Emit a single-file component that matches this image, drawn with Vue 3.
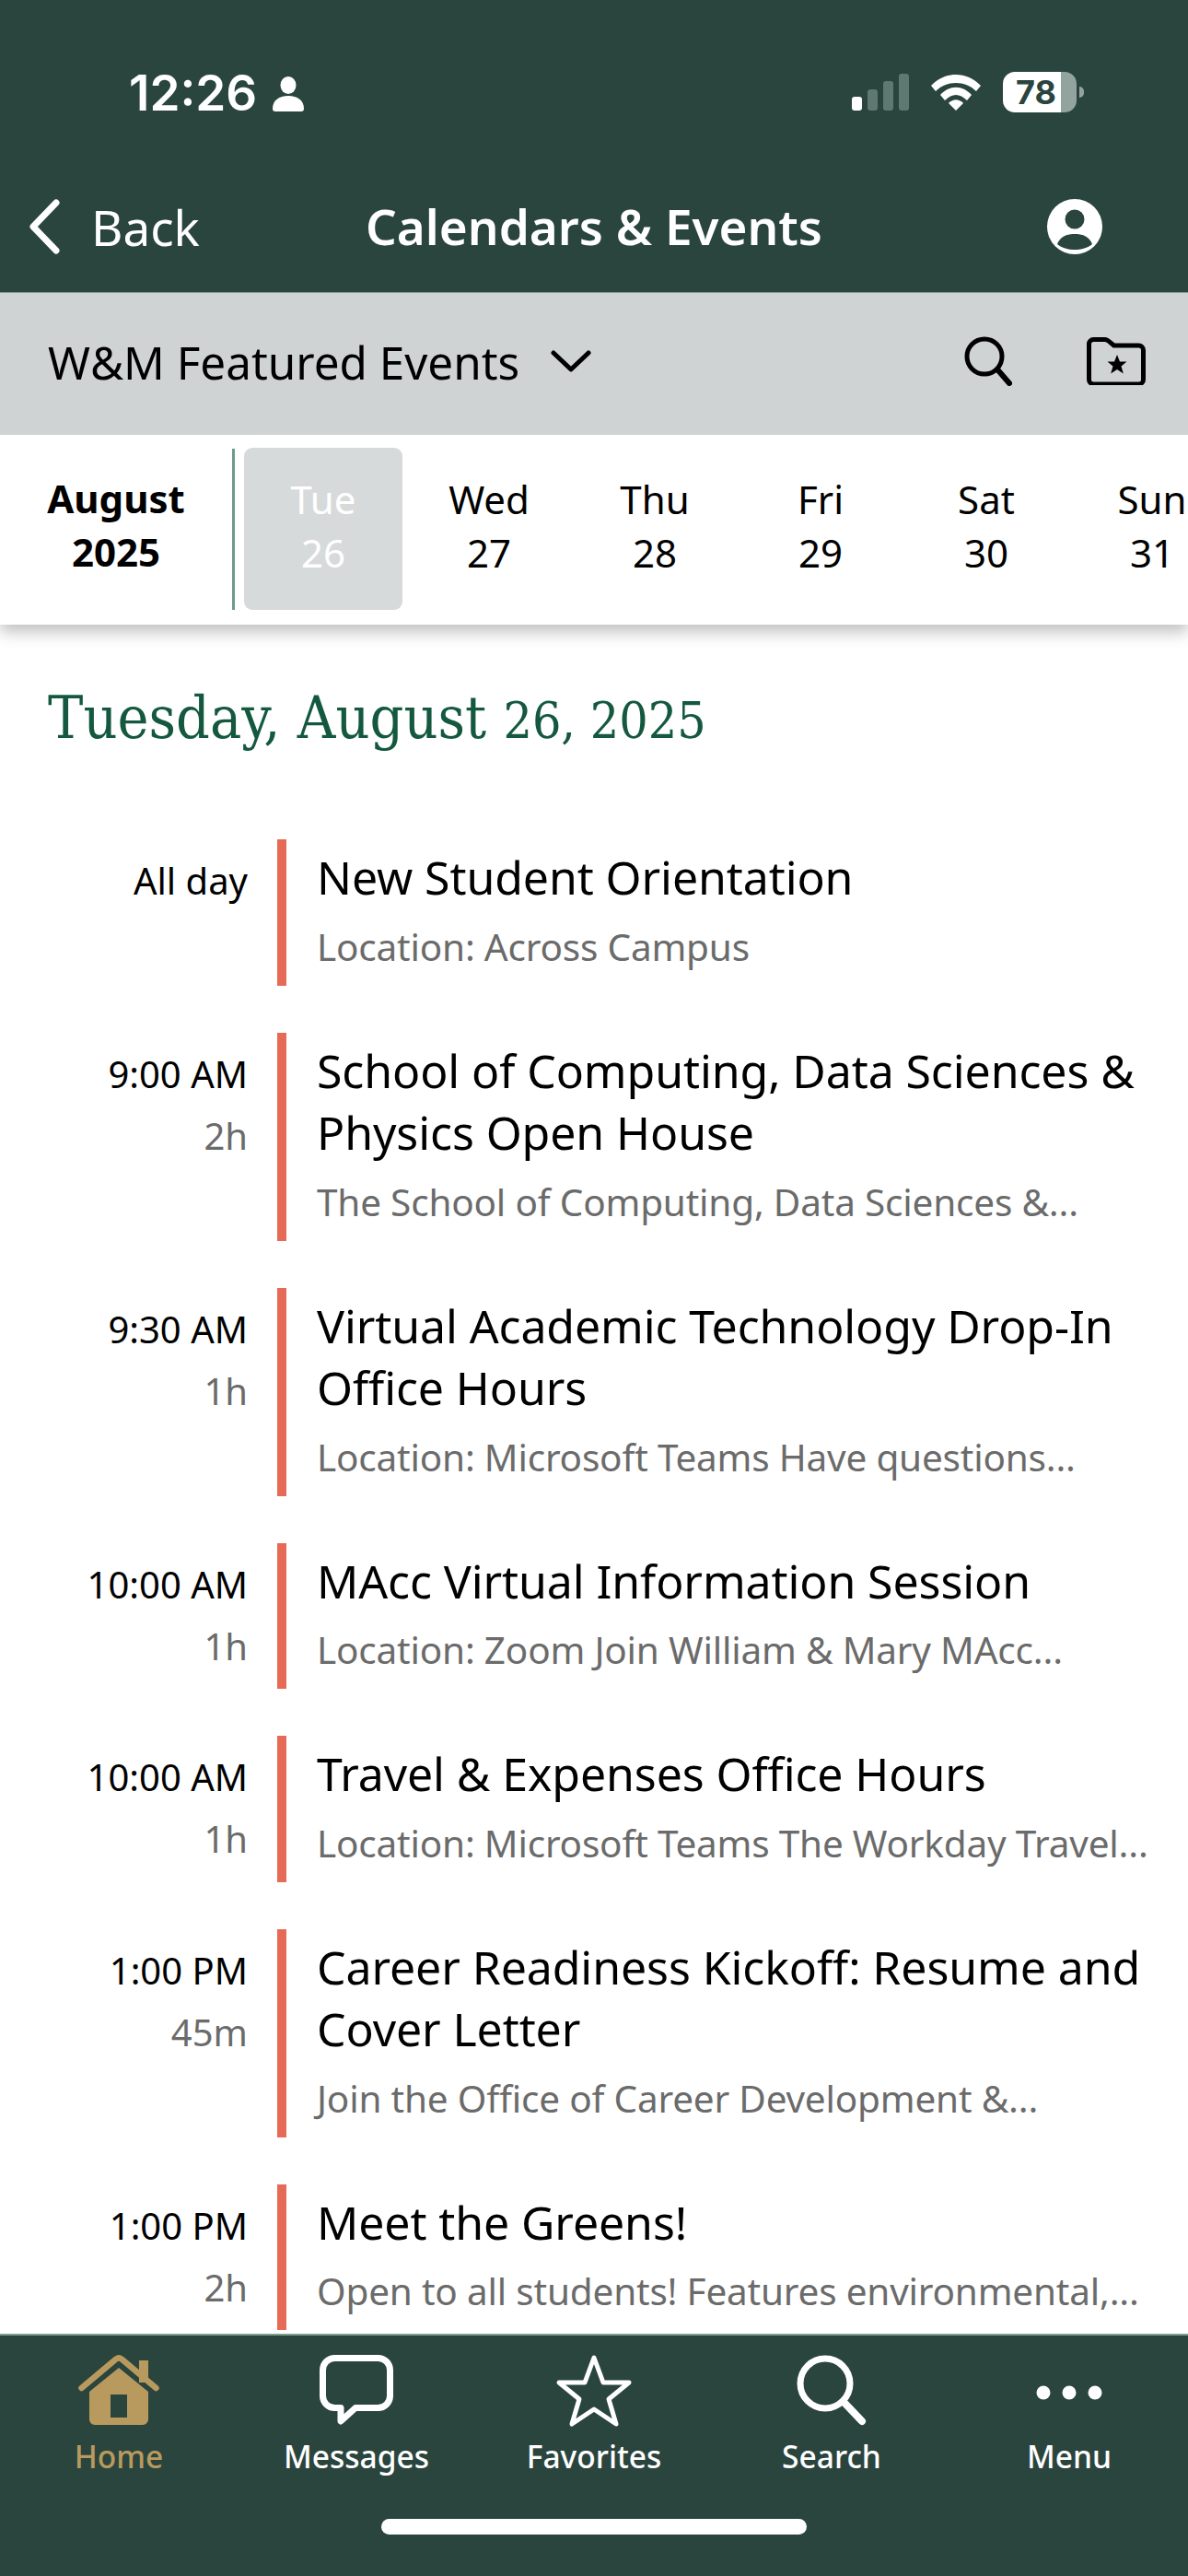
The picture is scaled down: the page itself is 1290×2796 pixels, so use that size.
<script setup>
// calendar day view, data is static
const days = [
  { name: "Tue", num: 26, active: true },
  { name: "Wed", num: 27 },
  { name: "Thu", num: 28 },
  { name: "Fri", num: 29 },
  { name: "Sat", num: 30 },
  { name: "Sun", num: 31 },
];

const events = [
  { time: "All day", title: ["New Student Orientation"], desc: "Location: Across Campus" },
  { time: "9:00 AM", dur: "2h", title: ["School of Computing, Data Sciences &", "Physics Open House"], desc: "The School of Computing, Data Sciences &..." },
  { time: "9:30 AM", dur: "1h", title: ["Virtual Academic Technology Drop-In", "Office Hours"], desc: "Location: Microsoft Teams Have questions..." },
  { time: "10:00 AM", dur: "1h", title: ["MAcc Virtual Information Session"], desc: "Location: Zoom Join William & Mary MAcc..." },
  { time: "10:00 AM", dur: "1h", title: ["Travel & Expenses Office Hours"], desc: "Location: Microsoft Teams The Workday Travel..." },
  { time: "1:00 PM", dur: "45m", title: ["Career Readiness Kickoff: Resume and", "Cover Letter"], desc: "Join the Office of Career Development &..." },
  { time: "1:00 PM", dur: "2h", title: ["Meet the Greens!"], desc: "Open to all students! Features environmental,..." },
];
</script>

<template>
  <div class="page">
    <header class="top">
      <div class="status">
        <div class="status-left">
          <span class="clock">12:26</span>
          <svg class="person" viewBox="0 0 34 38" width="34" height="38">
            <ellipse cx="17" cy="9.500" rx="8.500" ry="9.500" fill="#fff" />
            <path d="M0 35c0-9 7-14 17-14s17 5 17 14c0 2-1 3-3 3H3c-2 0-3-1-3-3z" fill="#fff" />
          </svg>
        </div>
        <div class="status-right">
          <svg viewBox="0 0 62 40" width="62" height="40">
            <rect x="0" y="25" width="11" height="15" rx="3" fill="#fff" />
            <rect x="17" y="17" width="11" height="23" rx="3" fill="#5f7871" />
            <rect x="34" y="8" width="11" height="32" rx="3" fill="#5f7871" />
            <rect x="51" y="0" width="11" height="40" rx="3" fill="#5f7871" />
          </svg>
          <svg class="wifi" viewBox="0 0 54 40" width="54" height="40">
            <path d="M0 13C15 -3 39 -3 54 13L49 19C37 7 17 7 5 19z" fill="#fff" />
            <path d="M10 23C20 12 34 12 44 23L39 29C31 21 23 21 15 29z" fill="#fff" />
            <path d="M19 32C24 27 30 27 35 32L27 40z" fill="#fff" />
          </svg>
          <div class="battery">
            <div class="battery-body"><span>78</span></div>
            <div class="battery-tip"></div>
          </div>
        </div>
      </div>
      <div class="nav">
        <div class="back">
          <svg viewBox="0 0 36 60" width="36" height="60">
            <path d="M31 4L6 30l25 26" fill="none" stroke="#fff" stroke-width="7" stroke-linecap="round" stroke-linejoin="round" />
          </svg>
          <span>Back</span>
        </div>
        <div class="nav-title">Calendars &amp; Events</div>
        <svg class="avatar" viewBox="0 0 60 60" width="60" height="60">
          <circle cx="30" cy="30" r="30" fill="#fff" />
          <circle cx="30" cy="22" r="10.5" fill="#2a453e" />
          <path d="M11 49c3-8 10-11 19-11s16 3 19 11c-5 4-12 6-19 6s-14-2-19-6z" fill="#2a453e" />
        </svg>
      </div>
    </header>

    <div class="filter">
      <span class="filter-name">W&amp;M Featured Events</span>
      <svg class="filter-chev" viewBox="0 0 44 24" width="44" height="24">
        <path d="M3 3l19 18L41 3" fill="none" stroke="#000" stroke-width="5" stroke-linecap="round" stroke-linejoin="round" />
      </svg>
      <svg class="filter-search" viewBox="0 0 52 54" width="52" height="54">
        <circle cx="22" cy="22" r="19" fill="none" stroke="#000" stroke-width="5" />
        <path d="M36 36l13 15" fill="none" stroke="#000" stroke-width="6" stroke-linecap="round" />
      </svg>
      <svg class="filter-folder" viewBox="0 0 64 52" width="64" height="52">
        <path d="M2.500 8a5 5 0 0 1 5-5.500h12c3 0 5 2 7 4l3 2.500h27a5 5 0 0 1 5 5v32a5 5 0 0 1-5 5h-49a5 5 0 0 1-5-5z" fill="none" stroke="#000" stroke-width="5" />
        <path d="M33 19l3 7.500h7.500l-6 5 2.300 8L33 35l-6.800 4.500 2.300-8-6-5H30z" fill="#000" />
      </svg>
    </div>

    <div class="strip">
      <div class="month">August<br />2025</div>
      <div class="days">
        <div v-for="d in days" :key="d.num" class="day" :class="{ 'day--active': d.active }">
          <span>{{ d.name }}</span>
          <span>{{ d.num }}</span>
        </div>
      </div>
    </div>

    <main class="list">
      <h1 class="date">Tuesday, August <span class="date-num">26, 2025</span></h1>
      <div v-for="(e, i) in events" :key="i" class="event">
        <div class="when">
          <div>{{ e.time }}</div>
          <div v-if="e.dur" class="dur">{{ e.dur }}</div>
        </div>
        <div class="info">
          <div v-for="line in e.title" :key="line" class="title">{{ line }}</div>
          <div class="desc">{{ e.desc }}</div>
        </div>
      </div>
    </main>

    <footer class="tabs">
      <div class="tab-row">
        <div class="tab tab--on">
          <svg viewBox="0 0 88 78" width="88" height="78">
            <path d="M66 7h10v24H66z" fill="#b99a5e" />
            <path d="M3.500 37L41 5.500c2-1.500 4-1.500 6 0L84.500 37" fill="none" stroke="#b99a5e" stroke-width="6.500" stroke-linecap="round" stroke-linejoin="round" />
            <path d="M44 15L76 41v30a6 6 0 0 1-6 6H18a6 6 0 0 1-6-6V41zM35 44v25h18V44z" fill="#b99a5e" fill-rule="evenodd" />
          </svg>
          <span>Home</span>
        </div>
        <div class="tab">
          <svg viewBox="0 0 80 76" width="80" height="76">
            <path d="M16.500 3.500h47a13 13 0 0 1 13 13v28a13 13 0 0 1-13 13H39L23 72V57.500h-6.500a13 13 0 0 1-13-13v-28a13 13 0 0 1 13-13z" fill="none" stroke="#fff" stroke-width="7" stroke-linejoin="round" />
          </svg>
          <span>Messages</span>
        </div>
        <div class="tab">
          <svg viewBox="0 0 84 80" width="84" height="80">
            <path d="M42 5l10 27h28L58 50l8 27-24-16-24 16 8-27L4 32h28z" fill="none" stroke="#fff" stroke-width="5" stroke-linejoin="round" />
          </svg>
          <span>Favorites</span>
        </div>
        <div class="tab">
          <svg viewBox="0 0 76 76" width="76" height="76">
            <circle cx="31" cy="31" r="27" fill="none" stroke="#fff" stroke-width="7" />
            <path d="M51 51l20 21" fill="none" stroke="#fff" stroke-width="8" stroke-linecap="round" />
          </svg>
          <span>Search</span>
        </div>
        <div class="tab">
          <svg viewBox="0 0 76 78" width="76" height="78">
            <circle cx="10" cy="42" r="7.500" fill="#fff" />
            <circle cx="38" cy="42" r="7.500" fill="#fff" />
            <circle cx="66" cy="42" r="7.500" fill="#fff" />
          </svg>
          <span>Menu</span>
        </div>
      </div>
      <div class="home-bar"></div>
    </footer>
  </div>
</template>

<style scoped>
.page {
  width: 1290px;
  height: 2796px;
  display: flex;
  flex-direction: column;
  overflow: hidden;
  background: #fff;
  font-family: "Noto Sans", sans-serif;
  color: #000;
}

/* header */
.top {
  height: 318px;
  flex-shrink: 0;
  background: #2a453e;
  color: #fff;
  border-bottom: 1px solid #8a9692;
  box-sizing: border-box;
}
.status {
  height: 216px;
  padding: 78px 113px 0 140px;
  box-sizing: border-box;
  display: flex;
  justify-content: space-between;
  align-items: flex-start;
}
.status-left {
  display: flex;
  align-items: center;
  gap: 17px;
  height: 44px;
}
.clock {
  font-family: Inter, sans-serif;
  font-size: 53px;
  font-weight: 600;
  position: relative;
  top: 1px;
}
.person {
  margin-top: 4px;
}
.status-right {
  display: flex;
  align-items: center;
  gap: 24px;
  height: 44px;
}
.battery {
  display: flex;
  align-items: center;
  gap: 3px;
}
.battery-body {
  width: 80px;
  height: 44px;
  border-radius: 13px;
  background: linear-gradient(to right, #fff 0, #fff 63px, #93a39e 63px);
  display: flex;
  align-items: center;
  padding-left: 14px;
  box-sizing: border-box;
  color: #2a453e;
  font-family: Inter, sans-serif;
  font-size: 36px;
  font-weight: 700;
}
.battery-tip {
  width: 5px;
  height: 12px;
  background: #93a39e;
  border-radius: 0 6px 6px 0;
}
.nav {
  height: 60px;
  display: flex;
  align-items: center;
  padding: 0 93px 0 30px;
  position: relative;
}
.back {
  display: flex;
  align-items: center;
  gap: 33px;
  font-size: 53px;
}
.nav-title {
  position: absolute;
  left: 0;
  right: 0;
  padding-bottom: 2px;
  text-align: center;
  font-size: 53px;
  font-weight: 600;
}
.avatar {
  margin-left: auto;
}

/* gray filter bar */
.filter {
  height: 154px;
  flex-shrink: 0;
  background: #d0d3d4;
  display: flex;
  align-items: center;
  padding: 0 46px 6px 52px;
  box-sizing: border-box;
}
.filter-name {
  font-size: 49.400px;
}
.filter-chev {
  margin-left: 34px;
}
.filter-search {
  margin-left: auto;
}
.filter-folder {
  margin-left: 81px;
}

/* date strip */
.strip {
  height: 206px;
  flex-shrink: 0;
  display: flex;
  background: #fff;
  box-shadow: 0 8px 16px rgba(0, 0, 0, 0.25);
  position: relative;
  z-index: 1;
  overflow: hidden;
  clip-path: inset(0 0 -30px 0);
}
.month {
  width: 255px;
  height: 175px;
  flex-shrink: 0;
  margin-top: 15px;
  padding-top: 25px;
  box-sizing: border-box;
  text-align: center;
  font-size: 42px;
  line-height: 58px;
  font-weight: 700;
  border-right: 3px solid #6f9a8c;
}
.days {
  display: flex;
  padding: 14px 0 0 6px;
}
.day {
  width: 172px;
  height: 176px;
  margin: 0 4px;
  flex-shrink: 0;
  display: flex;
  flex-direction: column;
  align-items: center;
  padding-top: 27px;
  box-sizing: border-box;
  font-size: 42px;
  line-height: 58px;
  border-radius: 9px;
}
.day--active {
  background: #d7dadb;
  color: #fff;
}

/* event list */
.list {
  flex: 1;
  min-height: 0;
  overflow: hidden;
  padding-top: 41px;
}
.date {
  margin: 0 0 69px 52px;
  font-family: "DejaVu Serif Condensed", "DejaVu Serif", serif;
  font-size: 64px;
  line-height: 120px;
  font-weight: 400;
  color: #14593f;
}
.date-num {
  font-size: 55px;
}
.event {
  display: flex;
  margin-bottom: 51px;
}
.when {
  width: 269px;
  flex-shrink: 0;
  text-align: right;
  padding-top: 11px;
  font-size: 40px;
  line-height: 67px;
}
.dur {
  color: #6b6b6b;
}
.info {
  margin-left: 32px;
  border-left: 10px solid #e56b57;
  padding: 8px 0 9px 33px;
  flex: 1;
  min-width: 0;
}
.title {
  font-size: 50px;
  line-height: 67.500px;
  letter-spacing: -0.100px;
  white-space: nowrap;
}
.desc {
  margin-top: 8px;
  font-size: 40.500px;
  line-height: 66px;
  letter-spacing: -0.200px;
  color: #6b6b6b;
  white-space: nowrap;
}

/* bottom tab bar */
.tabs {
  height: 263px;
  flex-shrink: 0;
  background: #2a453e;
  border-top: 2px solid #7fa090;
  box-sizing: border-box;
  color: #fff;
}
.tab-row {
  display: grid;
  grid-template-columns: repeat(5, 1fr);
  padding-top: 18px;
}
.tab {
  display: flex;
  flex-direction: column;
  align-items: center;
  font-size: 33.500px;
  font-weight: 500;
  line-height: 46px;
}
.tab svg {
  height: 82px;
  margin-bottom: 8px;
}
.tab--on {
  color: #b99a5e;
}
.home-bar {
  width: 462px;
  height: 17px;
  border-radius: 9px;
  background: #fff;
  margin: 45px auto 0;
}
</style>
